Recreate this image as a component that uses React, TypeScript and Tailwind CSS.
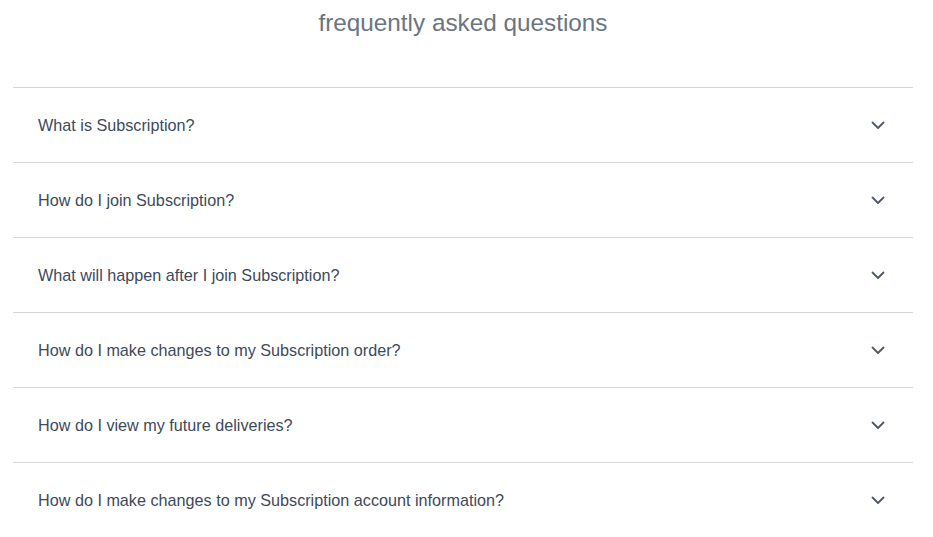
const questions = [
  "What is Subscription?",
  "How do I join Subscription?",
  "What will happen after I join Subscription?",
  "How do I make changes to my Subscription order?",
  "How do I view my future deliveries?",
  "How do I make changes to my Subscription account information?",
];

function Chevron() {
  return (
    <svg width="14" height="9" viewBox="0 0 14 9" fill="none">
      <path
        d="M1.5 1.5 L7 7 L12.5 1.5"
        stroke="#4f5865"
        strokeWidth="1.8"
        strokeLinecap="round"
        strokeLinejoin="round"
      />
    </svg>
  );
}

export default function App() {
  return (
    <div
      className="min-h-[537px] w-[933px] bg-white"
      style={{ fontFamily: '"Liberation Sans", Arial, sans-serif' }}
    >
      <div className="ml-[13px] mr-[20px]">
        <h2 className="pt-[7px] text-center text-[24.3px] leading-[32px] text-[#6b7582]">
          frequently asked questions
        </h2>
        <div className="mt-[48px] border-t border-[#d6d6d6]">
          {questions.map((q) => (
            <div
              key={q}
              className="flex h-[75px] items-center justify-between border-b border-[#d6d6d6] pl-[25px] pr-[28px]"
            >
              <span className="pt-[1px] text-[16.2px] text-[#3d4a5c]">{q}</span>
              <Chevron />
            </div>
          ))}
        </div>
      </div>
    </div>
  );
}
